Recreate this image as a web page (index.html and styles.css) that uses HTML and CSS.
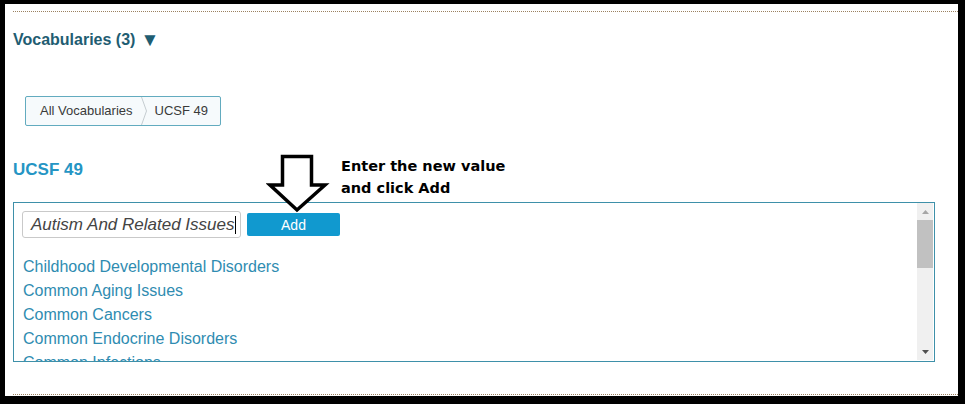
FILE: index.html
```html
<!DOCTYPE html>
<html>
<head>
<meta charset="utf-8">
<link rel="stylesheet" href="styles.css">
</head>
<body>
<div class="frame">
  <div class="rule"></div>
  <h2 class="vocab-title">Vocabularies (3) <span class="toggle">▼</span></h2>
  <nav class="crumbs">
    <span class="crumb crumb-first">All Vocabularies</span>
    <svg class="crumb-sep" width="6" height="28" viewBox="0 0 6 28"><polyline points="0.5,0 5.5,14 0.5,28" fill="none" stroke="#c4ccd0" stroke-width="1"/></svg>
    <span class="crumb crumb-last">UCSF 49</span>
  </nav>
  <div class="heading-row">
    <h3 class="vocab-name">UCSF 49</h3>
    <div class="annotation">
      <svg class="arrow" width="64" height="64" viewBox="0 0 64 64"><polygon points="16.5,5.5 45.5,5.5 45.5,34 59,34 31,59 4,34 16.5,34" fill="#fff" stroke="#000" stroke-width="3.5" stroke-linejoin="miter"/></svg>
      <p class="note">Enter the new value<br>and click Add</p>
    </div>
  </div>
  <div class="panel">
    <div class="panel-body">
      <div class="add-row">
        <div class="field">Autism And Related Issues<span class="cursor"></span></div>
        <button class="add-btn">Add</button>
      </div>
      <ul class="terms">
        <li>Childhood Developmental Disorders</li>
        <li>Common Aging Issues</li>
        <li>Common Cancers</li>
        <li>Common Endocrine Disorders</li>
        <li>Common Infections</li>
      </ul>
    </div>
    <div class="scrollbar">
      <div class="sb-btn"><svg width="7" height="4" viewBox="0 0 7 4"><polygon points="0,4 3.5,0 7,4" fill="#a6a6a6"/></svg></div>
      <div class="sb-thumb"></div>
      <div class="sb-space"></div>
      <div class="sb-btn"><svg width="7" height="4" viewBox="0 0 7 4"><polygon points="0,0 7,0 3.5,4" fill="#505050"/></svg></div>
    </div>
  </div>
  <div class="rule rule-bottom"></div>
</div>
</body>
</html>
```
FILE: styles.css
```css
html, body {
  margin: 0;
  padding: 0;
  background: #fff;
}

.frame {
  box-sizing: border-box;
  width: 965px;
  height: 404px;
  border-style: solid;
  border-color: #000;
  border-width: 4px 7px 8px 5px;
  padding: 7px 0 1px 8px;
  display: flex;
  flex-direction: column;
  font-family: "Liberation Sans", Arial, sans-serif;
  background: #fff;
}

.rule {
  height: 0;
  border-top: 1px dotted #9b8160;
}

.rule-bottom {
  margin-top: auto;
}

.vocab-title {
  margin: 18px 0 0;
  height: 20px;
  font-size: 16px;
  line-height: 20px;
  font-weight: bold;
  color: #1f5d72;
  display: flex;
  align-items: center;
  gap: 5px;
}

.toggle {
  display: block;
  font-size: 19px;
  line-height: 20px;
  margin-top: -1px;
}

.crumbs {
  align-self: flex-start;
  margin: 46px 0 0 12px;
  display: flex;
  align-items: center;
  border: 1px solid #62abbf;
  border-radius: 2px;
  background: #f6fafc;
  height: 28px;
}

.crumb {
  font-size: 13px;
  line-height: 28px;
  color: #3a3a3a;
}

.crumb-first {
  padding: 0 8px 0 14px;
}

.crumb-sep {
  display: block;
}

.crumb-last {
  padding: 0 12px 0 8px;
}

.heading-row {
  position: relative;
  margin-top: 34px;
}

.vocab-name {
  margin: 0;
  font-size: 17px;
  line-height: 20px;
  font-weight: bold;
  color: #2595c4;
}

.annotation {
  position: absolute;
  left: 253px;
  top: -9px;
  display: flex;
  align-items: flex-start;
}

.arrow {
  display: block;
}

.note {
  margin: 4px 0 0 11px;
  font-family: "DejaVu Sans", sans-serif;
  font-weight: bold;
  font-size: 14.5px;
  line-height: 22px;
  color: #000;
  white-space: nowrap;
}

.panel {
  margin-top: 22px;
  box-sizing: border-box;
  width: 922px;
  height: 160px;
  border: 1px solid #3e90a9;
  display: flex;
}

.panel-body {
  flex: 1;
  overflow: hidden;
  padding: 8px 0 0 8px;
}

.add-row {
  display: flex;
  align-items: center;
  gap: 6px;
}

.field {
  box-sizing: border-box;
  width: 219px;
  height: 27px;
  border: 1px solid #c9c9c9;
  border-radius: 3px;
  padding-left: 8px;
  display: flex;
  align-items: center;
  font-style: italic;
  font-size: 17px;
  color: #444;
  white-space: nowrap;
}

.cursor {
  display: inline-block;
  width: 1px;
  height: 18px;
  margin-left: 1px;
  background: #000;
}

.add-btn {
  width: 93px;
  height: 23px;
  border: none;
  border-radius: 2px;
  background: #1199cf;
  color: #fff;
  font-family: "Liberation Sans", Arial, sans-serif;
  font-size: 14px;
  padding: 0;
}

.terms {
  list-style: none;
  margin: 17px 0 0;
  padding: 0 0 0 1px;
}

.terms li {
  font-size: 16px;
  line-height: 24px;
  color: #2f8cb1;
  white-space: nowrap;
}

.scrollbar {
  width: 16px;
  margin: 0 1px 1px 0;
  background: #f0f0f0;
  display: flex;
  flex-direction: column;
}

.sb-btn {
  height: 17px;
  display: flex;
  align-items: center;
  justify-content: center;
}

.sb-btn svg {
  display: block;
}

.sb-thumb {
  height: 48px;
  background: #c1c1c1;
}

.sb-space {
  flex: 1;
}
```
